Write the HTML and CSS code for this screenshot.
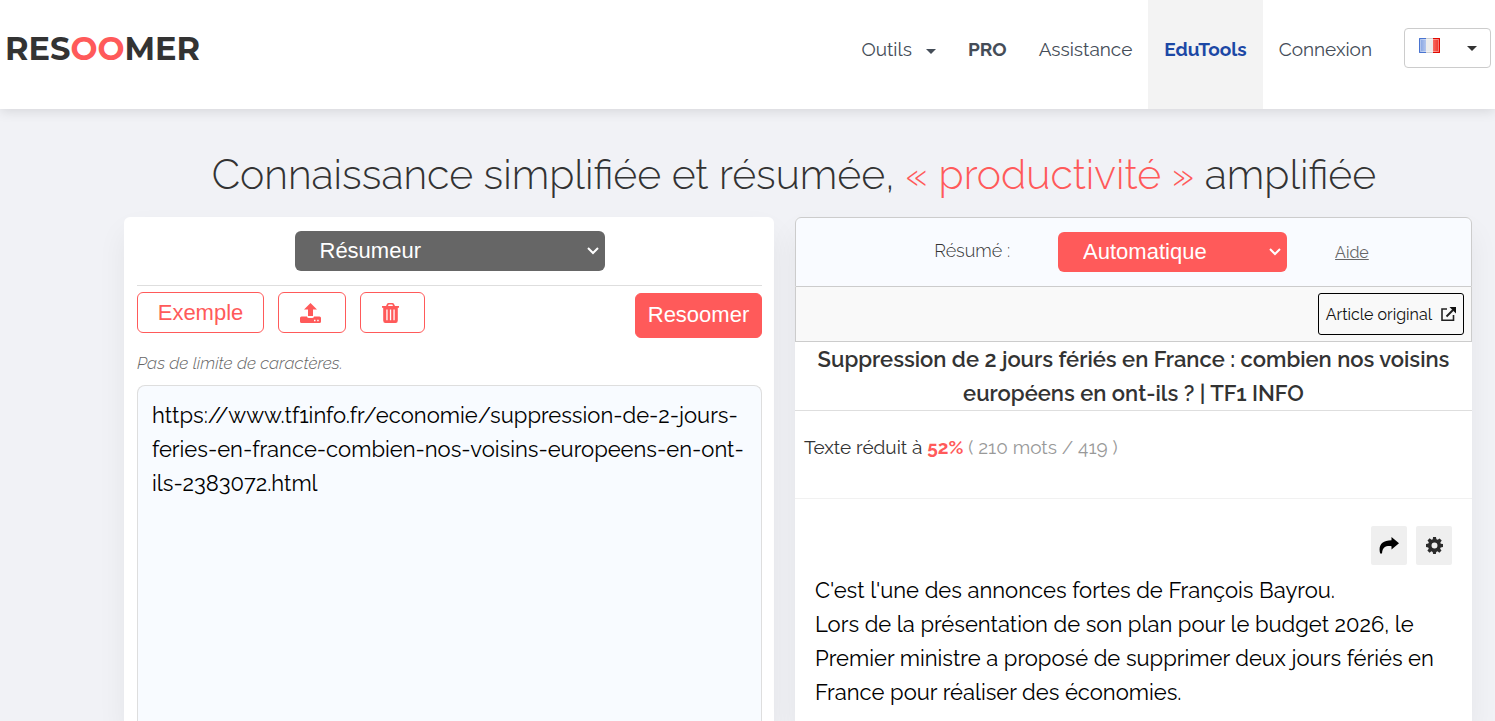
FILE: index.html
```html
<!DOCTYPE html>
<html lang="fr">
<head>
<meta charset="utf-8">
<meta name="viewport" content="width=device-width, initial-scale=1">
<title>Resoomer</title>
<link rel="stylesheet" href="styles.css">
</head>
<body>
<div class="page">
  <header class="topbar">
    <a class="logo" href="#">RES<span class="accent">OO</span>MER</a>
    <nav class="nav">
      <a class="nav-item" href="#">Outils <span class="caret"></span></a>
      <a class="nav-item strong" href="#">PRO</a>
      <a class="nav-item" href="#">Assistance</a>
      <a class="nav-item active" href="#">EduTools</a>
      <a class="nav-item" href="#">Connexion</a>
    </nav>
    <button class="lang" type="button" aria-label="Français">
      <svg class="flag" width="21" height="15" viewBox="0 0 21 15" aria-hidden="true">
        <defs>
          <linearGradient id="blue" x2="1" y2="0"><stop offset="0" stop-color="#7d9de0"/><stop offset="1" stop-color="#b3c6ee"/></linearGradient>
          <linearGradient id="red" x2="1" y2="0"><stop offset="0" stop-color="#f86a60"/><stop offset="1" stop-color="#ee2a20"/></linearGradient>
        </defs>
        <rect width="7" height="15" fill="url(#blue)"/>
        <rect x="7" width="7" height="15" fill="#ececec"/>
        <rect x="14" width="7" height="15" fill="url(#red)"/>
        <path d="M7 .5H.5v14H7" fill="none" stroke="#4a74d0"/>
        <path d="M7 .5h7M7 14.5h7" stroke="#d0d0d0"/>
        <path d="M14 .5h6.500v14H14" fill="none" stroke="#e00800"/>
        <path d="M1.500 1.500h18v12h-18z" fill="none" stroke="#fff" stroke-opacity=".35"/>
      </svg>
      <span class="caret"></span>
    </button>
  </header>

  <main class="main">
    <h1 class="headline">Connaissance simplifiée et résumée, <span class="accent">« productivité »</span> amplifiée</h1>
    <div class="columns">
      <section class="panel source">
        <div class="mode">
          <select class="select dark" aria-label="Mode"><option>Résumeur</option></select>
        </div>
        <div class="tools">
          <button class="btn example" type="button">Exemple</button>
          <button class="btn icon-btn upload" type="button" aria-label="Importer">
            <svg width="21" height="20" viewBox="0 0 21 20" aria-hidden="true"><path fill="currentColor" fill-rule="evenodd" d="M10.500 0 17 6.500h-4V13H8V6.500H4zM1.500 13.500H7q.3 1.500 2 1.500h3q1.700 0 2-1.500h5.500Q21 13.500 21 15v3.500q0 1.500-1.500 1.500h-18Q0 20 0 18.500V15q0-1.500 1.500-1.500zM14 16.700v1.500h1.500v-1.500zm3.200 0v1.500h1.500v-1.500z"/></svg>
          </button>
          <button class="btn icon-btn" type="button" aria-label="Effacer">
            <svg width="17" height="20" viewBox="0 0 17 20" aria-hidden="true"><path fill="currentColor" fill-rule="evenodd" d="M4 3 5 1q.4-1 1.500-1h4q1.100 0 1.500 1l1 2h4v1.700h-1.200V17.500q0 2.500-2.200 2.500H3.400Q1.200 20 1.200 17.500V4.700H0V3zm2 0h5l-.7-1.400H6.700zM4.300 6.500v10.700h1.300V6.500zm3.600 0v10.700h1.300V6.500zm3.500 0v10.700h1.300V6.500z"/></svg>
          </button>
          <button class="btn primary" type="button">Resoomer</button>
        </div>
        <label class="hint" for="source-text">Pas de limite de caractères.</label>
        <textarea class="source-text" id="source-text" spellcheck="false">https://www.tf1info.fr/economie/suppression-de-2-jours-feries-en-france-combien-nos-voisins-europeens-en-ont-ils-2383072.html</textarea>
      </section>

      <section class="panel result">
        <div class="result-head">
          <label class="result-label" for="summary">Résumé :</label>
          <select class="select red" id="summary"><option>Automatique</option></select>
          <a class="help" href="#">Aide</a>
        </div>
        <div class="result-bar">
          <a class="original" href="#">Article original
            <svg width="15" height="14" viewBox="0 0 15 14" aria-hidden="true"><g fill="none" stroke="#222" stroke-width="1.600"><path d="M6 2H1v11.200h11.500V8"/><path d="M5.500 9.500 12 3" stroke-width="2"/></g><path d="M8.500 0H15v6.500z" fill="#111"/></svg>
          </a>
        </div>
        <h2 class="article-title">Suppression de 2 jours fériés en France : combien nos voisins européens en ont-ils ? | TF1 INFO</h2>
        <p class="stats">Texte réduit à <strong class="accent">52%</strong> <span class="muted">( 210 mots / 419 )</span></p>
        <div class="actions">
          <button class="action" type="button" aria-label="Partager">
            <svg width="20" height="17" viewBox="0 0 20 17" aria-hidden="true"><path fill="#000" d="M12.500 0 20 6.300l-7.500 6.200V9.200C7 8.700 3.500 10 3 16.500H1.200C-1 9 2.500 3.300 12.500 3.300z"/></svg>
          </button>
          <button class="action" type="button" aria-label="Réglages">
            <svg width="17" height="17" viewBox="0 0 16 16" aria-hidden="true"><path fill="#2b2b2b" fill-rule="evenodd" d="M6.600 0h2.800l.4 2.200 1.200.5 1.800-1.300 2 2L13.500 5.200l.4 1.200 2.100.3v2.700l-2.200.4-.5 1.200 1.300 1.800-2 2-1.800-1.300-1.200.5L9.300 16H6.700l-.4-2-1.200-.5-1.800 1.300-2-2L2.600 11l-.5-1.200L0 9.400V6.600l2.200-.4.5-1.200-1.300-1.800 2-2L5.200 2.600l1.200-.5zM8 5.200a2.800 2.800 0 1 0 0 5.600 2.800 2.800 0 0 0 0-5.600z"/></svg>
          </button>
        </div>
        <p class="summary-text">C'est l'une des annonces fortes de François Bayrou.<br>Lors de la présentation de son plan pour le budget 2026, le Premier ministre a proposé de supprimer deux jours fériés en France pour réaliser des économies.</p>
      </section>
    </div>
  </main>
</div>
</body>
</html>
```
FILE: styles.css
```css
* { box-sizing: border-box; }

body {
  margin: 0;
  background: #f1f2f6;
  color: #333;
  font-family: Raleway, Lato, sans-serif;
  font-size: 22px;
}

a { color: inherit; text-decoration: none; }
button, select, textarea { font: inherit; margin: 0; }
p, h1, h2 { margin: 0; }
svg { display: block; }
.accent { color: #ff5a5a; }

.page {
  display: flex;
  flex-direction: column;
  height: 100vh;
  overflow: hidden;
}

.topbar {
  display: flex;
  flex: none;
  height: 109px;
  padding: 0 4px 0 5px;
  background: #fff;
  box-shadow: 0 2px 12px rgba(0, 0, 0, .12);
}

.logo {
  margin-right: auto;
  padding-top: 29px;
  font: 700 32px/40px Montserrat, Inter, sans-serif;
}

.nav { display: flex; font-size: 19px; line-height: 24px; color: #454d58; }
.nav-item { display: flex; align-items: flex-start; padding: 37px 16px 0; }
.strong { font-weight: 700; }
.active { background: #f3f3f3; color: #1c48a5; font-weight: 700; }

.caret {
  display: inline-block;
  border: 5px solid transparent;
  border-top-color: currentColor;
  border-bottom: 0;
}
.nav .caret { margin: 12px 0 0 14px; }

.lang {
  display: flex;
  align-items: center;
  justify-content: space-between;
  width: 87px;
  height: 40px;
  margin: 28px 0 0 16px;
  padding: 0 13px 0 14px;
  background: #fff;
  border: 1px solid #ccc;
  border-radius: 4px;
  color: #333;
}
.flag { margin-bottom: 5px; }

.main {
  display: flex;
  flex: 1;
  flex-direction: column;
  min-height: 0;
  padding: 41px 23px 0 124px;
}

.headline {
  margin-right: 8px;
  font-size: 41px;
  font-weight: 300;
  line-height: 50px;
  text-align: center;
  white-space: nowrap;
}

.columns {
  display: grid;
  flex: 1;
  grid-template-columns: 650fr 677fr;
  gap: 21px;
  min-height: 0;
  margin-top: 17px;
}

.panel {
  display: flex;
  flex-direction: column;
  min-width: 0;
  background: #fff;
  border-radius: 6px 6px 0 0;
  box-shadow: 0 15px 30px rgba(0, 0, 0, .06);
}

.source { padding: 14px 12px 0 13px; }
.mode {
  display: flex;
  justify-content: center;
  padding-bottom: 14px;
  border-bottom: 1px solid #dedede;
}

.select {
  height: 40px;
  padding: 0 25px 2px;
  border: 0;
  border-radius: 6px;
  appearance: none;
  color: #fff;
  font: 22px "Liberation Sans", Arial, sans-serif;
  background: url("data:image/svg+xml,%3Csvg xmlns='http://www.w3.org/2000/svg' width='12' height='8'%3E%3Cpath d='M1 1l5 5 5-5' fill='none' stroke='white' stroke-width='2'/%3E%3C/svg%3E") no-repeat right 6px center;
}
.dark { width: 310px; background-color: #666; }
.red { width: 229px; background-color: #ff5a5a; }

.tools { display: flex; align-items: flex-start; padding-top: 6px; }
.btn {
  display: flex;
  align-items: center;
  justify-content: center;
  height: 41px;
  margin-right: 14px;
  padding: 0;
  background: #fff;
  border: 1px solid #ff5a5a;
  border-radius: 6px;
  color: #ff5a5a;
  font: 22px "Liberation Sans", Arial, sans-serif;
}
.example { width: 127px; }
.icon-btn { width: 65px; padding-right: 4px; }
.upload { width: 68px; }
.primary {
  width: 127px;
  height: 45px;
  margin: 1px 0 0 auto;
  padding-bottom: 2px;
  background: #ff5a5a;
  color: #fff;
}

.hint {
  margin-top: 15px;
  color: #666;
  font-size: 17px;
  font-style: italic;
  font-weight: 300;
  line-height: 20px;
}

.source-text {
  flex: 1;
  width: 100%;
  min-height: 0;
  margin-top: 12px;
  padding: 12px 14px;
  background: #f8fbff;
  border: 1px solid #dedede;
  border-bottom: 0;
  border-radius: 8px 8px 0 0;
  outline: 0;
  resize: none;
  color: #000;
  font-size: 22px;
  line-height: 34px;
}

.result-head {
  display: flex;
  align-items: center;
  justify-content: center;
  gap: 48px;
  height: 70px;
  padding-left: 36px;
  border: 1px solid #ccc;
  border-radius: 6px 6px 0 0;
  background: #f9fbff;
}
.result-label { padding-bottom: 3px; font-size: 18px; font-weight: 300; }
.help { color: #666; font-size: 16px; text-decoration: underline; }

.result-bar {
  display: flex;
  justify-content: flex-end;
  padding: 6px 7px;
  background: #f9f9f9;
  border: 1px solid #ccc;
  border-top: 0;
}
.original {
  display: flex;
  align-items: center;
  gap: 9px;
  height: 42px;
  padding: 0 7px;
  border: 1px solid #000;
  border-radius: 3px;
  color: #111;
  font-size: 16px;
}

.article-title {
  padding: 0 20px;
  border-bottom: 1px solid #dedede;
  font-size: 22px;
  font-weight: 600;
  line-height: 34px;
  text-align: center;
}

.stats {
  padding: 19px 9px 34px;
  border-bottom: 1px solid #f1f1f1;
  font-size: 19px;
  line-height: 34px;
}
.muted { color: #999; }

.actions {
  display: flex;
  justify-content: flex-end;
  gap: 9px;
  padding: 27px 20px 8px;
}
.action {
  display: flex;
  align-items: center;
  justify-content: center;
  width: 36px;
  height: 39px;
  padding: 0;
  background: #efefef;
  border: 0;
  border-radius: 2px;
}

.summary-text {
  padding: 0 20px;
  color: #000;
  font-size: 22px;
  line-height: 34px;
}
```
